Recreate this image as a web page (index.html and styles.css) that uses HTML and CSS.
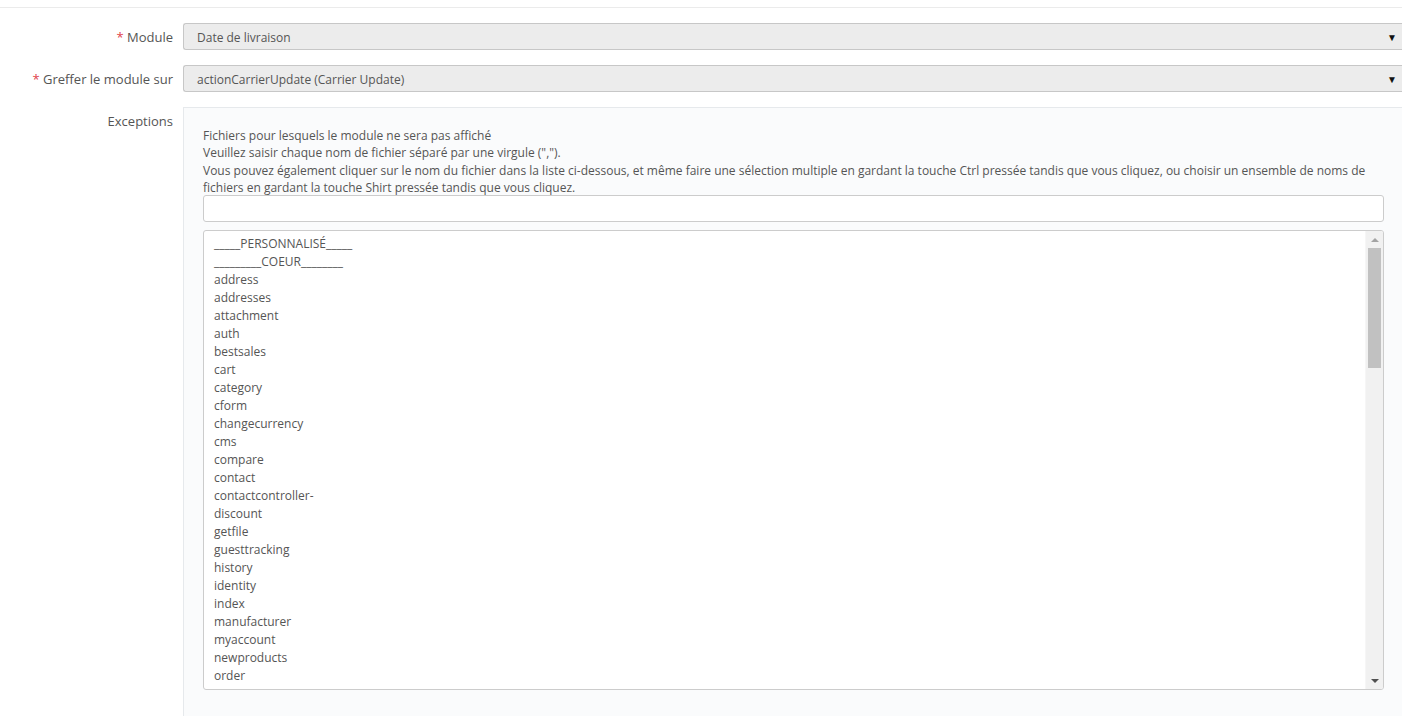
FILE: index.html
```html
<!DOCTYPE html>
<html lang="fr">

<head>
    <meta charset="UTF-8">
    <title>Greffer un module</title>
    <link rel="stylesheet" href="styles.css">
</head>

<body>
    <div class="topbar"></div>
    <form class="form">
        <div class="row">
            <label class="label"><span class="req">*</span> Module</label>
            <div class="select">
                <span>Date de livraison</span>
                <span class="caret">&#9660;</span>
            </div>
        </div>
        <div class="row">
            <label class="label"><span class="req">*</span> Greffer le module sur</label>
            <div class="select">
                <span>actionCarrierUpdate (Carrier Update)</span>
                <span class="caret">&#9660;</span>
            </div>
        </div>
        <div class="row">
            <label class="label label-top">Exceptions</label>
            <div class="panel">
                <p class="help">
                    Fichiers pour lesquels le module ne sera pas affiché<br>
                    Veuillez saisir chaque nom de fichier séparé par une virgule (",").<br>
                    Vous pouvez également cliquer sur le nom du fichier dans la liste ci-dessous, et même faire une sélection multiple en gardant la touche Ctrl pressée tandis que vous cliquez, ou choisir un ensemble de noms de fichiers en gardant la touche Shirt pressée tandis que vous cliquez.
                </p>
                <input type="text" class="text-input">
                <div class="listbox">
                    <ul class="options">
                        <li>_____PERSONNALISÉ_____</li>
                        <li>_________COEUR________</li>
                        <li>address</li>
                        <li>addresses</li>
                        <li>attachment</li>
                        <li>auth</li>
                        <li>bestsales</li>
                        <li>cart</li>
                        <li>category</li>
                        <li>cform</li>
                        <li>changecurrency</li>
                        <li>cms</li>
                        <li>compare</li>
                        <li>contact</li>
                        <li>contactcontroller-</li>
                        <li>discount</li>
                        <li>getfile</li>
                        <li>guesttracking</li>
                        <li>history</li>
                        <li>identity</li>
                        <li>index</li>
                        <li>manufacturer</li>
                        <li>myaccount</li>
                        <li>newproducts</li>
                        <li>order</li>
                    </ul>
                    <div class="scrollbar">
                        <span class="arrow up"></span>
                        <div class="track"><div class="thumb"></div></div>
                        <span class="arrow down"></span>
                    </div>
                </div>
            </div>
        </div>
    </form>
</body>

</html>
```

FILE: styles.css
```css
body {
    margin: 0;
    background: #fff;
    font-family: 'Open Sans', 'Noto Sans', sans-serif;
    color: #555;
    overflow: hidden;
}

.topbar {
    height: 7px;
    border-bottom: 1px solid #ebebeb;
}

.form {
    padding-top: 15px;
}

.row {
    display: flex;
    align-items: flex-start;
    margin-bottom: 15px;
}

.label {
    width: 173px;
    height: 27px;
    flex-shrink: 0;
    text-align: right;
    font-size: 13px;
    line-height: 29px;
    color: #555;
}

.label-top {
    height: auto;
    line-height: 18px;
    padding-top: 5px;
}

.req {
    color: #e0424a;
}

.select {
    flex: 1;
    margin-left: 10px;
    height: 27px;
    box-sizing: border-box;
    display: flex;
    align-items: center;
    justify-content: space-between;
    padding: 1px 5px 0 13px;
    background: #ececec;
    border: 1px solid #c7c7c7;
    border-right: none;
    border-radius: 3px 0 0 3px;
    font-size: 12px;
    color: #555;
}

.caret {
    font-size: 10px;
    color: #111;
}

.panel {
    flex: 1;
    margin-left: 10px;
    background: #fafbfc;
    border-top: 1px solid #e6e9ec;
    border-left: 1px solid #e6e9ec;
    padding: 19px 18px 40px 19px;
    box-sizing: border-box;
}

.help {
    margin: 0 0 -1px;
    font-size: 12px;
    line-height: 17.3px;
    color: #555;
}

.text-input {
    display: block;
    width: 100%;
    height: 27px;
    box-sizing: border-box;
    margin: 0;
    border: 1px solid #ccc;
    border-radius: 3px;
    background: #fff;
}

.listbox {
    margin-top: 8px;
    height: 460px;
    box-sizing: border-box;
    display: flex;
    border: 1px solid #ccc;
    border-radius: 3px;
    background: #fff;
    overflow: hidden;
}

.options {
    flex: 1;
    list-style: none;
    margin: 0;
    padding: 4px 10px 0;
    font-size: 12px;
    line-height: 18px;
    color: #555;
}

.scrollbar {
    width: 17px;
    display: flex;
    flex-direction: column;
    background: #f1f1f1;
    border-left: 1px solid #f6f6f6;
}

.arrow {
    height: 17px;
    display: flex;
    align-items: center;
    justify-content: center;
}

.arrow::before {
    content: "";
    border-left: 4px solid transparent;
    border-right: 4px solid transparent;
}

.up::before {
    border-bottom: 4px solid #a3a3a3;
}

.down::before {
    border-top: 4px solid #505050;
}

.track {
    flex: 1;
    padding: 0 2px;
}

.thumb {
    height: 120px;
    background: #c1c1c1;
}
```
